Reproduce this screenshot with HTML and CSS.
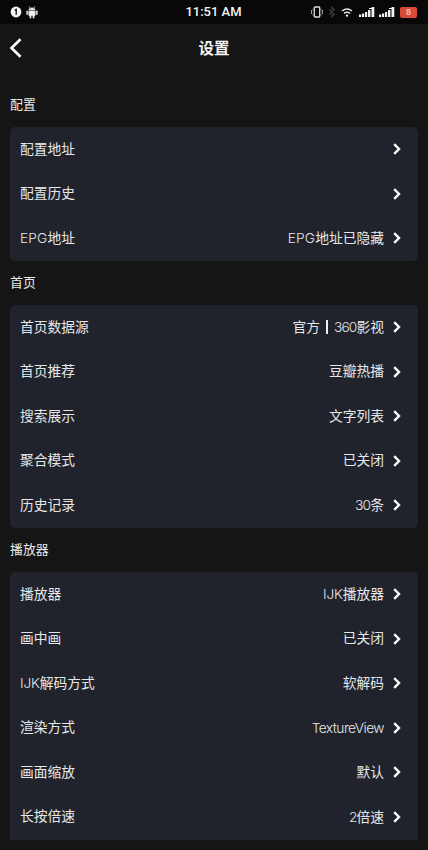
FILE: index.html
```html
<!DOCTYPE html>
<html lang="zh-CN">
<head>
<meta charset="utf-8">
<meta name="viewport" content="width=device-width, initial-scale=1">
<title>设置</title>
<link rel="stylesheet" href="styles.css">
</head>
<body>
<svg class="defs" aria-hidden="true">
  <symbol id="chevron" viewBox="0 0 8 12"><path d="M1.2 1.2 6 6 1.2 10.8" fill="none" stroke="currentColor" stroke-width="2.4"/></symbol>
  <symbol id="signal" viewBox="0 0 16 12"><path d="M0 8.5h2.2V11H0zM3 7.5h2.2V11H3zM6 6h2.2v5H6zM9 4h2.4v7H9zM12.5 1h2.8v10h-2.8zM10 2h3v1h-3z" fill="currentColor"/></symbol>
</svg>
<div class="screen">
  <header class="status">
    <div class="status-left">
      <svg width="12" height="12" viewBox="0 0 11 12"><circle cx="5.5" cy="6" r="5.4" fill="#f4f4f4"/><path d="M4.2 4.2 5.7 3.4V8.8" fill="none" stroke="#080808" stroke-width="1.3"/></svg>
      <svg width="12" height="13" viewBox="0 0 12 13" fill="#eee"><path d="M2.5 4.2C2.6 2.7 4 1.5 6 1.5s3.4 1.2 3.5 2.7zM2.5 4.7h7v5.1h-7zM.4 4.8h1.5v4H.4zM10.1 4.8h1.5v4h-1.5zM3.6 9h1.7v3.3H3.6zM6.7 9h1.7v3.3H6.7z"/><path d="M3 .4 4 2M9 .4 8 2" stroke="#eee" stroke-width=".7"/><circle cx="4.5" cy="3" r=".4" fill="#111"/><circle cx="7.5" cy="3" r=".4" fill="#111"/></svg>
    </div>
    <div class="clock">11:51 AM</div>
    <div class="status-right">
      <svg width="12" height="12" viewBox="0 0 12 12" fill="none" stroke="#ddd"><rect x="3.3" y="1" width="5.4" height="10" rx=".7" stroke-width="1.3"/><path d="M.6 4v4M11.4 4v4M2 2.8v1M10 2.8v1M2 8.5v1M10 8.5v1" stroke-width=".8"/></svg>
      <svg class="bluetooth" width="8" height="12" viewBox="0 0 8 12" fill="none" stroke="#383838" stroke-width="1.1"><path d="m1 3.5 5.5 5L4 11V1l2.5 2.5-5.5 5"/></svg>
      <svg class="wifi" width="12" height="12" viewBox="0 0 12 12" fill="none" stroke="#e4e4e4" stroke-width="1.4"><path d="M1 5q5-4 10 0M3 7.4q3-2.3 6 0"/><circle cx="6" cy="9.6" r="1.2" fill="#e4e4e4" stroke="none"/></svg>
      <svg class="signal" width="16" height="12"><use href="#signal"/></svg>
      <svg class="signal" width="16" height="12"><use href="#signal"/></svg>
      <div class="battery">8</div>
    </div>
  </header>
  <nav class="titlebar">
    <svg class="back" width="13" height="20" viewBox="0 0 13 20"><path d="M11.5 1.3 2.5 10l9 8.7" fill="none" stroke="#fff" stroke-width="2.6"/></svg>
    <h1>设置</h1>
  </nav>
  <main>
    <h2>配置</h2>
    <section class="card">
      <div class="row"><span>配置地址</span><svg class="chev"><use href="#chevron"/></svg></div>
      <div class="row"><span>配置历史</span><svg class="chev"><use href="#chevron"/></svg></div>
      <div class="row"><span><b class="caps">EPG</b>地址</span><span class="value"><b class="caps">EPG</b>地址已隐藏</span><svg class="chev"><use href="#chevron"/></svg></div>
    </section>
    <h2>首页</h2>
    <section class="card">
      <div class="row"><span>首页数据源</span><span class="value">官方<i class="divider"></i><b class="num">360</b>影视</span><svg class="chev"><use href="#chevron"/></svg></div>
      <div class="row"><span>首页推荐</span><span class="value">豆瓣热播</span><svg class="chev"><use href="#chevron"/></svg></div>
      <div class="row"><span>搜索展示</span><span class="value">文字列表</span><svg class="chev"><use href="#chevron"/></svg></div>
      <div class="row"><span>聚合模式</span><span class="value">已关闭</span><svg class="chev"><use href="#chevron"/></svg></div>
      <div class="row"><span>历史记录</span><span class="value"><b class="num">30</b>条</span><svg class="chev"><use href="#chevron"/></svg></div>
    </section>
    <h2>播放器</h2>
    <section class="card cut">
      <div class="row"><span>播放器</span><span class="value"><b>IJK</b>播放器</span><svg class="chev"><use href="#chevron"/></svg></div>
      <div class="row"><span>画中画</span><span class="value">已关闭</span><svg class="chev"><use href="#chevron"/></svg></div>
      <div class="row"><span><b>IJK</b>解码方式</span><span class="value">软解码</span><svg class="chev"><use href="#chevron"/></svg></div>
      <div class="row"><span>渲染方式</span><span class="value"><b class="word">TextureView</b></span><svg class="chev"><use href="#chevron"/></svg></div>
      <div class="row"><span>画面缩放</span><span class="value">默认</span><svg class="chev"><use href="#chevron"/></svg></div>
      <div class="row"><span>长按倍速</span><span class="value"><b class="num">2</b>倍速</span><svg class="chev"><use href="#chevron"/></svg></div>
    </section>
  </main>
</div>
</body>
</html>
```
FILE: styles.css
```css
* { box-sizing: border-box; }
body {
  margin: 0;
  background: #151515;
  color: #e6e7ea;
  font-family: "Liberation Sans", "Noto Sans CJK SC", sans-serif;
}
.defs { display: none; }
.screen { height: 850px; overflow: hidden; }
.status {
  display: grid;
  grid-template-columns: 1fr auto 1fr;
  align-items: center;
  height: 24px;
  padding: 0 11px 0 10px;
  background: #080808;
}
.status svg { display: block; }
.status-left { display: flex; gap: 4px; align-items: center; }
.clock {
  font: 500 13px/24px Roboto, sans-serif;
  color: #f2f2f2;
}
.status-right { display: flex; align-items: center; justify-content: flex-end; }
.bluetooth { margin-left: 5px; }
.wifi { margin-left: 5px; }
.signal { margin-left: 4px; color: #f0f0f0; }
.wifi + .signal { margin-left: 6px; }
.battery {
  width: 17px;
  height: 11px;
  margin-left: 5px;
  border-radius: 2px;
  background: #d94a38;
  color: #f3b7a9;
  font: 700 9px/11px "Liberation Sans", sans-serif;
  text-align: center;
}
.titlebar {
  display: grid;
  grid-template-columns: 1fr auto 1fr;
  align-items: center;
  height: 48px;
  padding: 0 9px;
}
h1 {
  margin: 0;
  padding-top: 2px;
  color: #f5f5f5;
  font-size: 15.5px;
  line-height: 24px;
  font-weight: 700;
}
main { padding: 10.5px 10px 0; }
h2 {
  margin: 0;
  height: 44.5px;
  line-height: 44px;
  font-size: 12.9px;
  font-weight: 400;
  color: #e8e8e8;
}
.card {
  padding: 0 17.5px 0 10px;
  border-radius: 5px;
  background: #20232b;
}
.cut { height: 268px; border-radius: 5px 5px 0 0; }
.row {
  display: flex;
  align-items: center;
  height: 44.5px;
  font-size: 13.75px;
  line-height: 20px;
  white-space: nowrap;
}
.row > span { padding-top: 1px; }
.value { margin-left: auto; }
.chev {
  flex: none;
  width: 8px;
  height: 12px;
  margin-left: 8.5px;
  color: #fafafa;
}
.row > span:first-child + .chev { margin-left: auto; }
b {
  font-family: Inter, "Liberation Sans", sans-serif;
  font-weight: 300;
  letter-spacing: -0.2px;
}
.caps { letter-spacing: 0.15px; }
.num { letter-spacing: -0.85px; }
.word { letter-spacing: -0.55px; }
.divider {
  display: inline-block;
  width: 2px;
  height: 14px;
  margin: 0 6px;
  background: #eee;
  vertical-align: -2px;
}
```
